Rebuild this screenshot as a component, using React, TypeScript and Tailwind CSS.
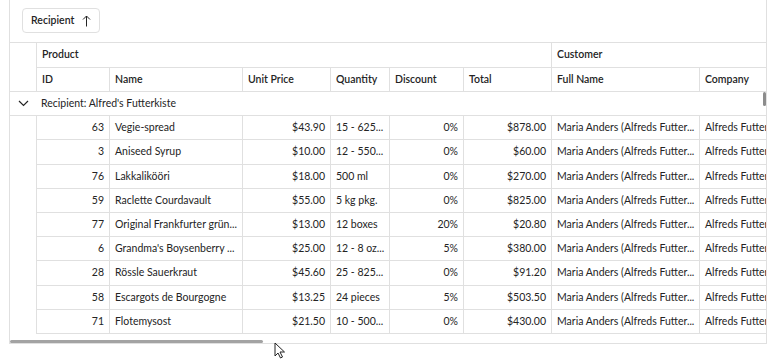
const cols = [
  { key: 'id', label: 'ID', w: 'w-[73px]', right: true },
  { key: 'name', label: 'Name', w: 'w-[133px]' },
  { key: 'price', label: 'Unit Price', w: 'w-[88px]', right: true },
  { key: 'qty', label: 'Quantity', w: 'w-[59px]' },
  { key: 'disc', label: 'Discount', w: 'w-[74px]', right: true },
  { key: 'total', label: 'Total', w: 'w-[88px]', right: true },
  { key: 'full', label: 'Full Name', w: 'w-[148px]' },
  { key: 'company', label: 'Company', w: 'w-[120px]' },
];

const rows = [
  ['63', 'Vegie-spread', '$43.90', '15 - 625...', '0%', '$878.00'],
  ['3', 'Aniseed Syrup', '$10.00', '12 - 550...', '0%', '$60.00'],
  ['76', 'Lakkalikööri', '$18.00', '500 ml', '0%', '$270.00'],
  ['59', 'Raclette Courdavault', '$55.00', '5 kg pkg.', '0%', '$825.00'],
  ['77', 'Original Frankfurter grün...', '$13.00', '12 boxes', '20%', '$20.80'],
  ['6', "Grandma's Boysenberry ...", '$25.00', '12 - 8 oz...', '5%', '$380.00'],
  ['28', 'Rössle Sauerkraut', '$45.60', '25 - 825...', '0%', '$91.20'],
  ['58', 'Escargots de Bourgogne', '$13.25', '24 pieces', '5%', '$503.50'],
  ['71', 'Flotemysost', '$21.50', '10 - 500...', '0%', '$430.00'],
];

// row heights as measured, the grid rounds 24.2px rows
const heights = ['h-[24px]', 'h-[25px]', 'h-[24px]', 'h-[24px]', 'h-[24px]', 'h-[24px]', 'h-[25px]', 'h-[24px]', 'h-[24px]'];

function GroupRow({ label }: { label: string }) {
  return (
    <div className="flex h-[24px] shrink-0 items-center border-b border-[#e0e0e0]">
      <div className="flex w-[26px] shrink-0 justify-center">
        <svg width="11" height="7" viewBox="0 0 11 7">
          <path d="M1 1 L5.5 5.5 L10 1" fill="none" stroke="#242424" strokeWidth="1.2" />
        </svg>
      </div>
      <span className="pl-[5px] whitespace-nowrap">{label}</span>
    </div>
  );
}

export default function App() {
  return (
    <div
      className="relative h-[360px] w-[780px] overflow-hidden bg-white pl-[9px] text-[10.5px] text-[#242424]"
      style={{ fontFamily: 'Lato, "Open Sans", sans-serif' }}
    >
      <div className="flex h-[344px] w-[758px] flex-col overflow-hidden border-r border-b border-l border-[#e0e0e0]">
        {/* group panel */}
        <div className="flex h-[43px] shrink-0 items-start border-b border-[#e0e0e0] pt-[8px] pl-[12px]">
          <button className="flex h-[25px] w-[78px] items-center rounded-[4px] border border-[#e0e0e0] pl-[8px] font-semibold">
            Recipient
            <svg className="ml-[8px]" width="9" height="12" viewBox="0 0 9 12">
              <path d="M4.5 11.5 V1 M1 4.5 L4.5 1 L8 4.5" fill="none" stroke="#242424" strokeWidth="1" />
            </svg>
          </button>
        </div>

        {/* band header */}
        <div className="flex h-[25px] shrink-0">
          <div className="w-[26px] shrink-0" />
          <div className="flex w-[515px] shrink-0 items-center border-b border-l border-[#e0e0e0] pl-[5px] font-semibold">
            Product
          </div>
          <div className="flex w-[300px] shrink-0 items-center border-b border-l border-[#e0e0e0] pl-[5px] font-semibold">
            Customer
          </div>
        </div>

        {/* column header */}
        <div className="flex h-[24px] shrink-0 border-b border-[#e0e0e0]">
          <div className="w-[26px] shrink-0" />
          {cols.map((c) => (
            <div
              key={c.key}
              className={`${c.w} flex shrink-0 items-center overflow-hidden border-l border-[#e0e0e0] pl-[5px] font-semibold whitespace-nowrap`}
            >
              {c.label}
            </div>
          ))}
        </div>

        {/* body */}
        <div className="relative flex flex-1 flex-col overflow-hidden">
          <GroupRow label="Recipient: Alfred's Futterkiste" />
          {rows.map((r, i) => (
            <div key={i} className={`${heights[i]} flex shrink-0`}>
              <div className="w-[26px] shrink-0" />
              {cols.map((c, j) => {
                const v = j < 6 ? r[j] : j === 6 ? 'Maria Anders (Alfreds Futter...' : 'Alfreds Futter';
                return (
                  <div
                    key={c.key}
                    className={`${c.w} flex shrink-0 items-center overflow-hidden border-b border-l border-[#e0e0e0] whitespace-nowrap ${
                      c.right ? 'justify-end pr-[5px]' : 'pl-[5px]'
                    }`}
                  >
                    {v}
                  </div>
                );
              })}
            </div>
          ))}
          <GroupRow label="Recipient: Alfreds Futterkiste" />

          {/* scrollbars */}
          <div className="absolute bottom-0 left-0 h-[3px] w-[253px] rounded-full bg-[#a3a3a3]" />
          <div className="absolute top-0 right-0 h-[14px] w-[3px] rounded-full bg-[#8c8c8c]" />
        </div>
      </div>

      {/* mouse pointer */}
      <svg className="absolute top-[342px] left-[274px]" width="12" height="17" viewBox="0 0 12 17">
        <path d="M1 1 L1 14 L4 11 L6.5 16 L8.5 15 L6 10 L10.5 10 Z" fill="white" stroke="#222" strokeWidth="1" strokeLinejoin="round" />
      </svg>
    </div>
  );
}
